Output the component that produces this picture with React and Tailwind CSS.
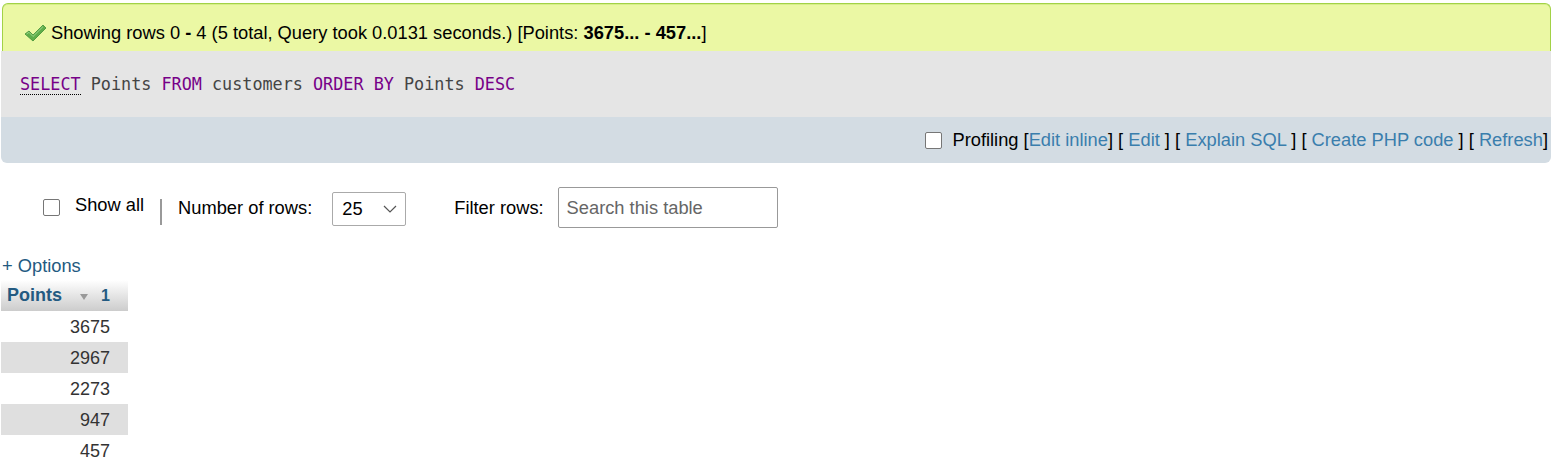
import React from 'react';

const ROWS = [3675, 2967, 2273, 947, 457];

function Check() {
  return (
    <svg width="24" height="20" viewBox="0 0 24 20" className="mr-[4px] shrink-0">
      <path d="M2 11 L6 8 L10 12 L20 2 L23 5 L10 18 Z" fill="#5fae4a" stroke="#3f8f35" strokeWidth="0.8" />
      <path d="M3.5 11 L6 9.3 L10 13.5 L20 3.6" fill="none" stroke="#9bd68a" strokeWidth="1" />
    </svg>
  );
}

function Box() {
  return <span className="inline-block w-[17px] h-[17px] border border-[#767676] bg-white rounded-[2px] shrink-0" />;
}

export default function App() {
  const kw = 'text-[#770088]';
  const link = 'text-[#3a7ead]';
  return (
    <div className="font-['Liberation_Sans',Arial,sans-serif] text-[18.3px] text-black bg-white min-h-[471px]">
      <div className="ml-[1px] pt-[3px] w-[1550px]">
        <div className="ml-[1px] h-[48px] border border-b-0 border-[#a2d246] rounded-t-[6px] bg-[#ebf8a4] shadow-[inset_0_1px_0_#d6ee8a] flex items-start pt-[19px] pl-[20px] leading-[20px]">
          <Check />
          <span>
            Showing rows 0 <b>-</b> 4 (5 total, Query took 0.0131 seconds.) [Points: <b>3675...</b> <b>-</b> <b>457...</b>]
          </span>
        </div>
        <div className="h-[66px] bg-[#e5e5e5] flex items-center pl-[19px] pt-[1px]">
          <code className="font-['DejaVu_Sans_Mono',monospace] text-[16.8px] text-[#444] whitespace-pre">
            <span className={`${kw} border-b border-dotted border-black`}>SELECT</span> Points <span className={kw}>FROM</span> customers <span className={kw}>ORDER</span> <span className={kw}>BY</span> Points <span className={kw}>DESC</span>
          </code>
        </div>
        <div className="h-[46px] bg-[#d3dce3] rounded-b-[6px] flex items-center justify-end pr-[3px]">
          <Box />
          <span className="ml-[10px]">Profiling</span>
          <span className="whitespace-pre">
            {' ['}<a className={link}>Edit inline</a>{'] [ '}<a className={link}>Edit</a>{' ] [ '}<a className={link}>Explain SQL</a>{' ] [ '}<a className={link}>Create PHP code</a>{' ] [ '}<a className={link}>Refresh</a>{']'}
          </span>
        </div>
      </div>

      <div className="flex items-center h-[41px] mt-[24px] pl-[43px]">
        <Box />
        <span className="ml-[15px] -mt-[6px]">Show all</span>
        <span className="ml-[16px] w-[2px] h-[26px] bg-[#999] mt-[8px]" />
        <span className="ml-[16px]">Number of rows:</span>
        <div className="ml-[20px] w-[74px] h-[34px] border border-[#aaa] rounded-[2px] bg-white flex items-center justify-between pl-[9px] pr-[8px] mt-[3px]">
          <span>25</span>
          <svg width="14" height="8" viewBox="0 0 14 8"><path d="M1 1 L7 7 L13 1" fill="none" stroke="#555" strokeWidth="1.2" /></svg>
        </div>
        <span className="ml-[48px]">Filter rows:</span>
        <div className="ml-[14px] w-[220px] h-[41px] border border-[#999] rounded-[2px] bg-white flex items-center pl-[8px] text-[#666]">
          Search this table
        </div>
      </div>

      <div className="mt-[27px] pl-[2px] text-[#235a81] leading-[22px]">+ Options</div>
      <table className="ml-[1px] mt-[3px] border-collapse w-[127px] text-[18px]">
        <thead>
          <tr>
            <th className="h-[31px] bg-gradient-to-b from-white to-[#cccccc] text-left pl-[6px] text-[#235a81] font-bold">
              <div className="flex items-center">
                <span>Points</span>
                <svg width="10" height="8" viewBox="0 0 10 8" className="ml-[17px] mt-[2px]"><path d="M1 1 L9 1 L5 7 Z" fill="#999" /></svg>
                <span className="ml-[12px] text-[16px]">1</span>
              </div>
            </th>
          </tr>
        </thead>
        <tbody>
          {ROWS.map((r, i) => (
            <tr key={r} className={i % 2 === 1 ? 'bg-[#dfdfdf]' : 'bg-white'}>
              <td className="h-[31px] text-right pr-[18px] pt-[2px] text-[#333]">{r}</td>
            </tr>
          ))}
        </tbody>
      </table>
    </div>
  );
}
